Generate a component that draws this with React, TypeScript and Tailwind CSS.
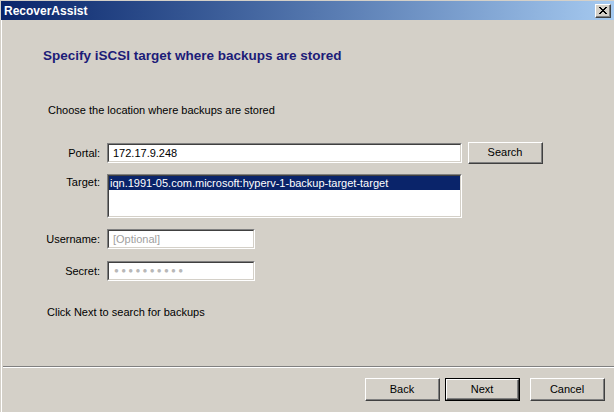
import React from "react";

function Sunken({ className = "", children }: { className?: string; children?: React.ReactNode }) {
  return (
    <div className={`border-t border-l border-t-[#808080] border-l-[#808080] border-b border-r border-b-white border-r-white ${className}`}>
      <div className="h-full w-full border-t border-l border-t-[#404040] border-l-[#404040] border-b border-r border-b-[#d4d0c8] border-r-[#d4d0c8] bg-white overflow-hidden">
        {children}
      </div>
    </div>
  );
}

function Btn({ label, def = false, className = "" }: { label: string; def?: boolean; className?: string }) {
  const inner = (
    <div className="h-full w-full border-t border-l border-t-white border-l-white border-b border-r border-b-[#404040] border-r-[#404040]">
      <div className="h-full w-full border-b border-r border-b-[#808080] border-r-[#808080] flex items-center justify-center">
        {label}
      </div>
    </div>
  );
  return def ? (
    <div className={`border border-black ${className}`}>{inner}</div>
  ) : (
    <div className={className}>{inner}</div>
  );
}

export default function App() {
  return (
    <div className="w-[614px] h-[412px] bg-[#d4d0c8] overflow-hidden pl-[1px] pt-[1px] text-[11px] text-black font-['Liberation_Sans',Arial,sans-serif]">
      {/* title bar */}
      <div className="h-[19px] flex items-center justify-between bg-gradient-to-r from-[#0a246a] to-[#a6caf0] pl-[3px] pr-[3px]">
        <span className="text-white font-bold text-[12px] leading-[14px]">RecoverAssist</span>
        <div className="w-[16px] h-[14px] bg-[#d4d0c8] border-t border-l border-t-white border-l-white border-b border-r border-b-[#404040] border-r-[#404040]">
          <div className="h-full w-full border-b border-r border-b-[#808080] border-r-[#808080] flex items-center justify-center">
            <svg width="8" height="7" viewBox="0 0 8 7" shapeRendering="crispEdges">
              <path d="M0 0h2v1h-2zM6 0h2v1h-2zM1 1h2v1h-2zM5 1h2v1h-2zM2 2h4v1h-4zM3 3h2v1h-2zM2 4h4v1h-4zM1 5h2v1h-2zM5 5h2v1h-2zM0 6h2v1h-2zM6 6h2v1h-2z" fill="#000" />
            </svg>
          </div>
        </div>
      </div>

      {/* body */}
      <div className="flex flex-col border-l border-white h-[392px]">
        <div className="pl-[41px] mt-[28px] text-[13.5px] leading-[16px] font-bold text-[#1c1c78]">
          Specify iSCSI target where backups are stored
        </div>
        <div className="pl-[46px] mt-[40px] leading-[13px]">Choose the location where backups are stored</div>

        <div className="pl-[38px] mt-[25px] flex flex-col">
          <div className="flex items-center h-[22px]">
            <div className="w-[60px] text-right">Portal:</div>
            <Sunken className="ml-[7px] w-[355px] h-[20px]">
              <div className="pl-[4px] leading-[16px]">172.17.9.248</div>
            </Sunken>
            <Btn label="Search" className="ml-[6px] w-[75px] h-[22px]" />
          </div>

          <div className="flex items-start mt-[10px]">
            <div className="w-[60px] text-right pt-[2px] leading-[13px]">Target:</div>
            <Sunken className="ml-[7px] w-[355px] h-[44px]">
              <div className="bg-[#0a246a] text-white leading-[14px] h-[14px] pl-[1px]">
                iqn.1991-05.com.microsoft:hyperv-1-backup-target-target
              </div>
            </Sunken>
          </div>

          <div className="flex items-center h-[20px] mt-[11px]">
            <div className="w-[60px] text-right">Username:</div>
            <Sunken className="ml-[7px] w-[148px] h-[20px]">
              <div className="pl-[4px] leading-[16px] text-[#a0a0a0]">[Optional]</div>
            </Sunken>
          </div>

          <div className="flex items-center h-[20px] mt-[12px]">
            <div className="w-[60px] text-right">Secret:</div>
            <Sunken className="ml-[7px] w-[148px] h-[20px]">
              <div className="pl-[5px] leading-[16px] text-[#b8b8b8] text-[8px] tracking-[2.3px]">●●●●●●●●●●</div>
            </Sunken>
          </div>
        </div>

        <div className="pl-[45px] mt-[25px] leading-[13px] h-[13px]">Click Next to search for backups</div>

        <div className="ml-[1px] mt-[47px] border-t border-t-[#808080] border-b border-b-white" />

        <div className="mt-[10px] flex justify-end pr-[9px]">
          <Btn label="Back" className="w-[75px] h-[23px]" />
          <Btn label="Next" def className="ml-[5px] w-[75px] h-[23px]" />
          <Btn label="Cancel" className="ml-[10px] w-[75px] h-[23px]" />
        </div>
      </div>
    </div>
  );
}
